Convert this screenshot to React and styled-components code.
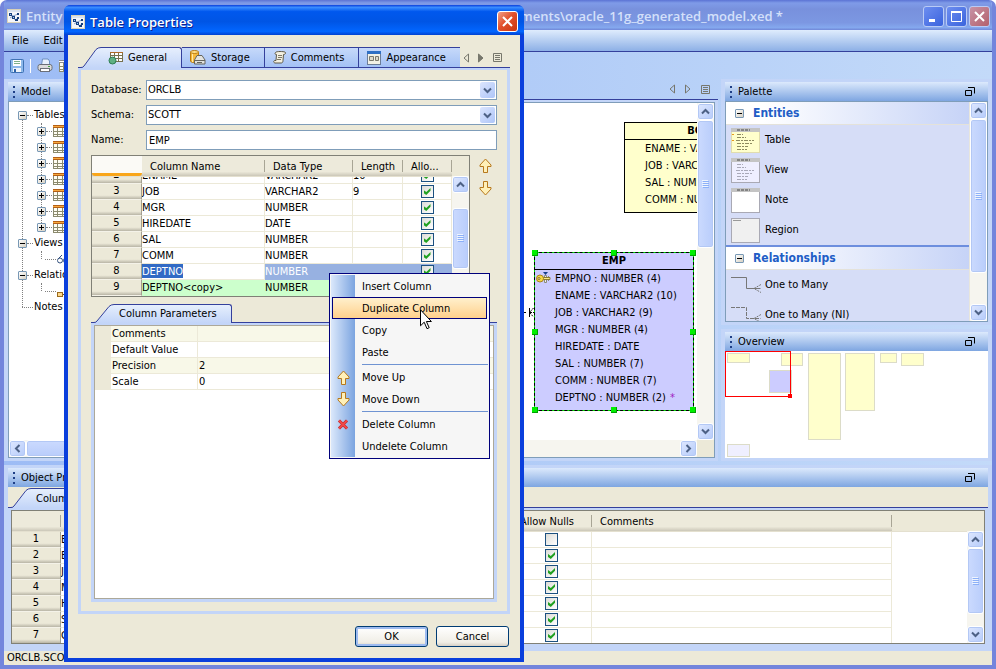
import React from 'react';
import styled, { createGlobalStyle, css } from 'styled-components';

const colors = {
  face: '#ece9d8',
  panel: '#c3d5f8',
  navy: '#34409c',
  input: '#7f9db9',
  line: '#ece9d8',
  green: '#ccffcc',
};

const GlobalStyle = createGlobalStyle`
  *, *::before, *::after {
    box-sizing: border-box;
  }

  body {
    margin: 0;
    overflow: hidden;
    color: #000;
    font: 11px/16px "DejaVu Sans Condensed", Tahoma, Verdana, sans-serif;
  }

  button, input, select {
    font: inherit;
    color: inherit;
    margin: 0;
    padding: 0;
    border: 0;
    background: none;
  }

  h1, h2, h3, p, ul {
    margin: 0;
    padding: 0;
    font: inherit;
    list-style: none;
  }

  svg {
    display: block;
    flex: none;
  }
`;

/* ---------- icons ---------- */

const AppIcon = () => (
  <svg width="14" height="14" viewBox="0 0 14 14">
    <rect width="14" height="14" rx="1" fill="#f4f6fa" />
    <rect width="14" height="3" fill="#d8e2f0" />
    <rect x="0.5" y="0.5" width="13" height="13" fill="none" stroke="#d9d2b8" />
    <path d="M3 5 L6 7 L11 5 M3 9 L6 7 L8 11 L11 9" fill="none" stroke="#8aa5cc" />
    <path d="M2 4h3v3h-3z M5 7h3v3h-3z M10 4h2v2h-2z M8 10h3v2h-3z M10 8h2v2h-2z" fill="#173f7d" />
    <path d="M3 5h1v1h-1z M6 8h1v1h-1z" fill="#9fd0f5" />
  </svg>
);

const SaveIcon = () => (
  <svg width="14" height="14" viewBox="0 0 14 14">
    <rect x="0.5" y="0.5" width="13" height="13" rx="1" fill="#8db8ea" stroke="#3f72b4" />
    <rect x="3" y="1" width="8" height="6" fill="#fff" />
    <path d="M4 2.500h6 M4 4.500h6" stroke="#7fb08a" />
    <rect x="3" y="9" width="8" height="4" fill="#eef3fa" />
    <rect x="4" y="10" width="2" height="3" fill="#2f62a8" />
  </svg>
);

const PrintIcon = () => (
  <svg width="16" height="15" viewBox="0 0 16 15">
    <path d="M4.500 7 L5.500 1 L11 1 L12.500 3 L12.500 7" fill="#e8f1fd" stroke="#6c8fc0" />
    <rect x="1" y="6.500" width="14" height="6" rx="2" fill="#dcdcdc" stroke="#6b6f78" />
    <rect x="3.500" y="10.500" width="9" height="3" fill="#fff" stroke="#6b6f78" />
    <rect x="11" y="8" width="2" height="1" fill="#3fa43f" />
  </svg>
);

const TableIcon = ({ head = '#b45f16', accent = '#f7a83c' }) => (
  <svg width="14" height="12" viewBox="0 0 14 12">
    <rect x="0.5" y="0.5" width="13" height="11" fill="#fffdf2" stroke="#8b8a6e" />
    <path d="M0 6.500h14 M0 9.500h14 M4.500 3v9 M9.500 3v9" stroke="#8b8a6e" />
    <rect width="14" height="3" fill={head} />
    <rect y="1" width="14" height="1" fill={accent} />
  </svg>
);

const GlassesIcon = () => (
  <svg width="14" height="10" viewBox="0 0 14 10" fill="none" stroke="#33507d">
    <circle cx="3" cy="6.500" r="2.500" />
    <circle cx="9" cy="6.500" r="2.500" />
    <path d="M1 5 L5 1 M7 5 L11 1" />
  </svg>
);

const RelationIcon = () => (
  <svg width="14" height="12" viewBox="0 0 14 12">
    <path d="M5 9.500h6 M11 4v5" stroke="#5b4a2c" fill="none" />
    <rect x="0.5" y="7.500" width="5" height="4" fill="#ffd98c" stroke="#9b6b1d" />
    <rect x="8.500" y="0.500" width="5" height="4" fill="#ffd98c" stroke="#9b6b1d" />
  </svg>
);

const GeneralIcon = () => (
  <svg width="15" height="13" viewBox="0 0 15 13">
    <rect x="2.500" y="0.500" width="12" height="9" fill="#fff" stroke="#77714f" />
    <path d="M2 3.500h13 M2 6.500h13 M6.500 0v10 M10.500 0v10" stroke="#77714f" />
    <rect x="2" y="0" width="13" height="1" fill="#b06a28" />
    <circle cx="4.500" cy="8.500" r="3.500" fill="#5fb083" stroke="#2d7d52" />
  </svg>
);

const StorageIcon = () => (
  <svg width="16" height="15" viewBox="0 0 16 15">
    <path d="M0.500 2v9c0 2 8 2 8 0V2z" fill="#f6b93a" stroke="#b97b12" />
    <path d="M2.500 3v9" stroke="#ffe9a8" />
    <ellipse cx="4.500" cy="2" rx="4" ry="1.500" fill="#ffe08a" stroke="#b97b12" />
    <path d="M4.500 10l2.500-4.500h5l3 4.500v4h-10.500z" fill="#e2e2de" stroke="#66665f" />
    <path d="M4.500 10.500h10.500 M7 12.500h5" stroke="#66665f" />
  </svg>
);

const CommentsIcon = () => (
  <svg width="13" height="13" viewBox="0 0 13 13">
    <path d="M2.500 1.500c1-1.500 8-1 9.500-.5c1 1 .5 2.500-1.500 2.500l-.5 6c0 2-1 2.500-2 2.500h-6c-2-.5-1.500-2.500 0-2.500h1l.500-6c-1.500 0-2-1-1-2z" fill="#f3efdf" stroke="#5d5948" />
    <path d="M5 4.500h4 M5 6.500h4 M4 8.500h4" stroke="#7d7967" />
  </svg>
);

const AppearanceIcon = () => (
  <svg width="14" height="14" viewBox="0 0 14 14">
    <rect x="0.500" y="0.500" width="13" height="13" fill="#f3f1e6" stroke="#6c7d97" />
    <rect x="0" y="0" width="14" height="3" fill="#2f6fc4" />
    <path d="M2.500 5.500h4v4h-4z M8.500 5.500h3v4h-3z" fill="#dcd9cb" stroke="#7c7a6e" />
  </svg>
);

const GoldArrow = ({ down }) => (
  <svg width="13" height="15" viewBox="0 0 13 15">
    <path
      d={down
        ? 'M4.500 .5h4v6h3.500v1.500l-5.500 6l-5.500-6v-1.500h3.500z'
        : 'M4.500 14.500h4v-6h3.500v-1.500l-5.500-6l-5.500 6v1.500h3.500z'}
      fill="#fff0b8"
      stroke="#b7791c"
    />
  </svg>
);

const DeleteIcon = () => (
  <svg width="12" height="11" viewBox="0 0 12 11">
    <path d="M2 1.500 L10 9.500 M10 1.500 L2 9.500" stroke="#b82020" strokeWidth="3" />
    <path d="M2 1.500 L10 9.500 M10 1.500 L2 9.500" stroke="#f04848" strokeWidth="2" />
  </svg>
);

const Chevron = ({ dir }) => {
  const turn = { up: 0, right: 90, down: 180, left: 270 }[dir];
  return (
    <svg width="9" height="9" viewBox="0 0 9 9">
      <path
        d="M1 6.500 L4.500 3 L8 6.500"
        transform={`rotate(${turn} 4.5 4.5)`}
        fill="none"
        stroke="#4d6185"
        strokeWidth="2"
      />
    </svg>
  );
};

const NavIcons = ({ solid }) => (
  <>
    <svg width="6" height="10" viewBox="0 0 6 10">
      <path d="M5.500 1v8l-4.500-4z" fill="none" stroke="#77776c" />
    </svg>
    <svg width="6" height="10" viewBox="0 0 6 10">
      <path d="M.5 1v8l4.500-4z" fill={solid ? '#77776c' : 'none'} stroke="#77776c" />
    </svg>
    <svg width="9" height="9" viewBox="0 0 9 9">
      <path d="M.5 .5h8v8h-8z M2 2.500h5 M2 4.500h5 M2 6.500h5" fill="none" stroke="#77776c" />
    </svg>
  </>
);

const FloatIcon = () => (
  <svg width="10" height="9" viewBox="0 0 10 9" fill="none" stroke="#000">
    <path d="M.5 3.500h6v5h-6z M3 .5h6.500v6" />
  </svg>
);

const PointerIcon = () => (
  <svg width="12" height="21" viewBox="0 0 12 21">
    <path d="M.5 .8v16l3.700-3.600l2.800 6.500l2.200-1l-2.800-6.200h5z" fill="#fff" stroke="#000" />
  </svg>
);

const KeyIcon = () => (
  <svg width="15" height="12" viewBox="0 0 15 12">
    <path d="M7 0h5l-2.500 3z" fill="#173f8a" />
    <path d="M8.500 3.500h2v7h-2z M12.500 4v5" fill="#eee" stroke="#8a8a7a" />
    <path d="M7 5.500h7v2h-7z" fill="#fbe98a" stroke="#8a7a30" />
    <circle cx="4" cy="6.500" r="3.500" fill="#f6d743" stroke="#a8841c" />
    <circle cx="3" cy="6.500" r="1" fill="#fff" stroke="#8a6a10" />
  </svg>
);

const EntityThumb = ({ kind }) => {
  const fill = { table: '#ffffcc', view: '#efefff', note: '#fff', region: '#f0f0f0' }[kind];
  return (
    <svg width="29" height="25" viewBox="0 0 29 25">
      <rect x="0.500" y="0.500" width="28" height="24" fill={fill} stroke={kind === 'table' ? '#e0dcae' : '#a9a9b4'} />
      {kind !== 'region' && <rect x="0" y="0" width="29" height="4" fill="#c4c4c4" />}
      {kind !== 'region' && <path d="M6 2h13" stroke="#444" strokeDasharray="3 1" />}
      {kind === 'region' && <path d="M2 2.500h8" stroke="#999" />}
      {(kind === 'table' || kind === 'view') && (
        <path
          d="M6 6.500h6 M6 9.500h9 M5 12.500h18 M6 15.500h16 M6 18.500h11 M6 21.500h10"
          stroke={kind === 'table' ? '#8d8b60' : '#a9a9b8'}
          strokeDasharray="4 1 2 1"
        />
      )}
      {kind === 'table' && <path d="M1 6h2v1h-2z M1 12h2v1h-2z" fill="#e89a1c" />}
    </svg>
  );
};

const RelationThumb = ({ dashed }) => (
  <svg width="31" height="16" viewBox="0 0 31 16" fill="none" stroke="#777">
    <path d="M0 .5h15.500v11h14" strokeDasharray={dashed ? '4 1' : undefined} />
    <path d="M30 7.500l-7 4l7 4" strokeDasharray="2 1" />
  </svg>
);

/* ---------- window chrome ---------- */

const Window = styled.div`
  position: relative;
  display: flex;
  flex-direction: column;
  height: 100vh;
  border: solid #7385dc;
  border-width: 0 4px 4px;
  border-radius: 7px 7px 0 0;
  overflow: hidden;
  background: linear-gradient(90deg, #9dbcf5, #c3daf9);
`;

const titleFont = css`
  font: 600 13px/18px "Open Sans", "Noto Sans", sans-serif;
`;

const WindowTitle = styled.header`
  display: flex;
  flex: none;
  align-items: center;
  height: 30px;
  margin: 0 -4px;
  padding: 2px 6px 0 7px;
  color: #d4e0fa;
  ${titleFont}
  background: linear-gradient(#5b73d4, #7f9be8 10%, #7891dd 30%, #7c97e2 75%, #84a8ee 92%, #7087d8);

  h1 {
    flex: 1;
    margin-left: 5px;
  }

  p {
    margin-right: 138px;
  }
`;

const CaptionButton = styled.button`
  display: grid;
  place-items: center;
  width: 21px;
  height: 21px;
  margin-left: 2px;
  border: 1px solid ${({ $active }) => ($active ? '#fff' : '#b9cbf6')};
  border-radius: 3px;
  background: ${({ $close, $active }) => {
    if ($active) return 'linear-gradient(135deg, #f0a088, #e2512c 45%, #c8350f)';
    return $close
      ? 'linear-gradient(135deg, #c893a6, #b3606c)'
      : 'linear-gradient(135deg, #6d8ef0, #3a63dd)';
  }};
`;

const CaptionIcon = ({ d, width = 2 }) => (
  <svg width="13" height="13" viewBox="0 0 13 13">
    <path d={d} fill="none" stroke="#fff" strokeWidth={width} />
  </svg>
);

const crossPath = 'M2 2L11 11M11 2L2 11';

const MenuBar = styled.nav`
  display: flex;
  flex: none;
  align-items: center;
  gap: 15px;
  height: 22px;
  padding: 0 8px;
  border-bottom: 1px solid ${colors.navy};
  background: linear-gradient(#dfecfd, #8db0e6);
`;

const ToolBar = styled.div`
  display: flex;
  flex: none;
  align-items: center;
  gap: 6px;
  height: 27px;
  padding: 0 6px;
`;

const ToolDivider = styled.span`
  width: 1px;
  height: 14px;
  background: #fff;
`;

const Workspace = styled.main`
  display: grid;
  flex: 1;
  min-height: 0;
  grid-template-columns: 180px 1fr 271px;
  gap: 3px;
  margin-bottom: 4px;
`;

const SideColumn = styled.div`
  display: flex;
  flex-direction: column;
  gap: 4px;
  min-height: 0;
`;

const Panel = styled.section`
  display: flex;
  flex-direction: column;
  flex: ${({ $grow }) => ($grow ? '1 1 0' : 'none')};
  min-width: 0;
  min-height: 0;
  padding: 3px 4px;
  background: ${colors.panel};
`;

const PanelHeader = styled.h2`
  display: flex;
  flex: none;
  align-items: center;
  height: 19px;
  padding: 0 13px 0 5px;
  background: linear-gradient(#dce9fc, #7ea6e1);

  span {
    flex: 1;
    margin-left: 5px;
  }
`;

const PanelTitle = ({ title, floating }) => (
  <PanelHeader>
    <svg width="3" height="12" viewBox="0 0 3 12">
      <path d="M0 0h2v2h-2z M0 5h2v2h-2z M0 10h2v2h-2z" fill="#1e3f87" />
    </svg>
    <span>{title}</span>
    {floating && <FloatIcon />}
  </PanelHeader>
);

/* ---------- scroll bars ---------- */

const Track = styled.div`
  display: flex;
  flex: none;
  flex-direction: ${({ $row }) => ($row ? 'row' : 'column')};
  ${({ $row }) => ($row ? 'height: 17px' : 'width: 17px')};
  background: #f6f5ef;
`;

const luna = css`
  border: 1px solid #fff;
  border-radius: 3px;
  box-shadow: inset 0 0 0 1px #b3c8f5;
`;

const ScrollButton = styled.button`
  ${luna}
  display: grid;
  flex: none;
  place-items: center;
  width: 17px;
  height: 17px;
  background: linear-gradient(135deg, #dfe8ff, #b5cbfa);
`;

const Thumb = styled.div`
  ${luna}
  display: grid;
  place-items: center;
  flex: ${({ $share }) => $share} 1 0;
  background: linear-gradient(${({ $row }) => ($row ? 180 : 90)}deg, #cbdafe, #b9cdfb);
`;

const Rest = styled.div`
  flex: ${({ $share }) => $share} 1 0;
`;

const ScrollBar = ({ row, before = 0, thumb, rest }) => (
  <Track $row={row}>
    <ScrollButton type="button" aria-label={row ? 'Scroll left' : 'Scroll up'}>
      <Chevron dir={row ? 'left' : 'up'} />
    </ScrollButton>
    <Rest $share={before} />
    <Thumb $row={row} $share={thumb}>
      {!row && (
        <svg width="7" height="8" viewBox="0 0 7 8">
          <path d="M0 .5h6 M0 2.500h6 M0 4.500h6 M0 6.500h6" stroke="#eef4fe" />
          <path d="M1 1.500h6 M1 3.500h6 M1 5.500h6 M1 7.500h6" stroke="#8cb0f8" />
        </svg>
      )}
    </Thumb>
    <Rest $share={rest} />
    <ScrollButton type="button" aria-label={row ? 'Scroll right' : 'Scroll down'}>
      <Chevron dir={row ? 'right' : 'down'} />
    </ScrollButton>
  </Track>
);

/* ---------- model tree ---------- */

const SunkenBox = styled.div`
  display: flex;
  flex: 1 1 0;
  flex-direction: column;
  min-height: 0;
  overflow: hidden;
  border: 1px solid ${colors.input};
  background: #fff;
`;

const Tree = styled.ul`
  position: relative;
  flex: 1;
  padding: 5px 0 0 9px;

  &::before {
    content: '';
    position: absolute;
    top: 13px;
    left: 13px;
    height: 192px;
    border-left: 1px dotted #808080;
  }
`;

const Branch = styled.ul`
  position: relative;
  padding-left: ${({ $leaf }) => ($leaf ? 23 : 19)}px;

  &::before {
    content: '';
    position: absolute;
    top: 0;
    bottom: 8px;
    left: 23px;
    border-left: 1px dotted #808080;
  }
`;

const TreeRow = styled.div`
  display: flex;
  align-items: center;
  height: 16px;

  &::before {
    content: '';
    order: 1;
    width: ${({ $leaf }) => ($leaf ? 11 : 6)}px;
    margin: 0 1px 0 ${({ $leaf }) => ($leaf ? 4 : 0)}px;
    border-top: 1px dotted #808080;
  }

  > span,
  > svg {
    order: 2;
  }
`;

const Expander = styled.button`
  position: relative;
  display: grid;
  flex: none;
  place-items: center;
  width: 9px;
  height: 9px;
  border: 1px solid #7898b5;
  border-radius: 1px;
  background: linear-gradient(135deg, #fff, #d6d0c2);
`;

const ExpandButton = ({ open }) => (
  <Expander type="button" aria-label={open ? 'Collapse' : 'Expand'}>
    <svg width="5" height="5" viewBox="0 0 5 5">
      <path d={open ? 'M0 2.500h5' : 'M0 2.500h5 M2.500 0v5'} stroke="#000" />
    </svg>
  </Expander>
);

const ModelTree = () => (
  <Tree>
    <li>
      <TreeRow><ExpandButton open /><span>Tables</span></TreeRow>
      <Branch>
        {Array.from({ length: 7 }, (_, i) => (
          <TreeRow as="li" key={i}><ExpandButton /><TableIcon /></TreeRow>
        ))}
      </Branch>
    </li>
    <li>
      <TreeRow><ExpandButton open /><span>Views</span></TreeRow>
      <Branch $leaf><TreeRow as="li" $leaf><GlassesIcon /></TreeRow></Branch>
    </li>
    <li>
      <TreeRow><ExpandButton open /><span>Relationships</span></TreeRow>
      <Branch $leaf><TreeRow as="li" $leaf><RelationIcon /></TreeRow></Branch>
    </li>
    <TreeRow as="li" $leaf><span>Notes</span></TreeRow>
  </Tree>
);

/* ---------- diagram ---------- */

const Editor = styled.section`
  display: flex;
  flex-direction: column;
  min-width: 0;
  min-height: 0;
`;

const EditorTabs = styled.div`
  display: flex;
  flex: none;
  align-items: center;
  justify-content: flex-end;
  gap: 10px;
  height: 21px;
  padding-right: 8px;
  border-bottom: 1px solid ${colors.navy};
`;

const EditorBody = styled.div`
  display: flex;
  flex: 1;
  min-height: 0;
  padding: 2px 3px 3px;
  background: ${colors.panel};
`;

const CanvasRow = styled.div`
  display: flex;
  flex: 1;
  min-height: 0;
`;

const ScrollCorner = styled.div`
  display: grid;
  grid-template-columns: 1fr 17px;
  background: ${colors.face};
`;

const Canvas = styled.div`
  position: relative;
  flex: 1;
  overflow: hidden;
`;

const Entity = styled.div`
  position: absolute;
  left: ${({ $x }) => $x}px;
  top: ${({ $y }) => $y}px;
  width: ${({ $width }) => $width}px;
  padding-bottom: 4px;
  border: 1px ${({ $selected }) => ($selected ? 'dashed' : 'solid')} #000;
  background: ${({ $selected }) => ($selected
    ? 'linear-gradient(#ccccff, #ccccff) padding-box, #00e000'
    : '#ffffcc')};

  h3 {
    border-bottom: 1px solid #000;
    font-weight: bold;
    line-height: 16px;
    text-align: center;
  }

  li {
    padding-left: 20px;
    line-height: 17px;
    white-space: nowrap;
  }

  em {
    margin-left: 4px;
    color: #a020c0;
    font-style: normal;
  }
`;

const KeyMark = styled.span`
  position: absolute;
  top: 19px;
  left: 1px;
`;

const Handle = styled.i`
  position: absolute;
  left: ${({ $left }) => $left};
  top: ${({ $top }) => $top};
  width: 6px;
  height: 6px;
  margin: -3px;
  background: #00f000;
  border: solid #00a000;
  border-width: 0 1px 1px 0;
`;

const Connector = styled.svg`
  position: absolute;
  left: 323px;
  top: 203px;
`;

const stops = ['0%', '50%', '100%'];
const handles = stops
  .flatMap(left => stops.map(top => ({ left, top })))
  .filter(({ left, top }) => left !== '50%' || top !== '50%');

const bonusFields = ['ENAME : VARCHAR2 (10)', 'JOB : VARCHAR2 (9)', 'SAL : NUMBER', 'COMM : NUMBER'];
const empFields = [
  'EMPNO : NUMBER (4)',
  'ENAME : VARCHAR2 (10)',
  'JOB : VARCHAR2 (9)',
  'MGR : NUMBER (4)',
  'HIREDATE : DATE',
  'SAL : NUMBER (7)',
  'COMM : NUMBER (7)',
  'DEPTNO : NUMBER (2)',
];

const Diagram = () => (
  <Canvas>
    <Connector width="20" height="14" viewBox="0 0 20 14" fill="none" stroke="#000">
      <path d="M0 6.500h12 M15.500 2v9" />
      <path d="M19.500 2l-4 4.500l4 4.500 M16 6.500h4" strokeDasharray="2 1" />
    </Connector>
    <Entity $x={433} $y={19} $width={166}>
      <h3>BONUS</h3>
      <ul>{bonusFields.map(field => <li key={field}>{field}</li>)}</ul>
    </Entity>
    <Entity $x={343} $y={149} $width={160} $selected>
      <h3>EMP</h3>
      <ul>
        {empFields.map(field => (
          <li key={field}>{field}{field.startsWith('DEPTNO') && <em>*</em>}</li>
        ))}
      </ul>
      <KeyMark><KeyIcon /></KeyMark>
      {handles.map(({ left, top }) => <Handle key={left + top} $left={left} $top={top} />)}
    </Entity>
  </Canvas>
);

/* ---------- palette ---------- */

const PaletteBox = styled(SunkenBox)`
  flex-direction: row;
`;

const PaletteList = styled.div`
  flex: 1;
  overflow: hidden;
  background: #d6ddf7;
  border-right: 1px solid #e8e6dc;
`;

const PaletteHead = styled.h3`
  display: flex;
  align-items: center;
  gap: 9px;
  height: ${({ $ruled }) => ($ruled ? 25 : 23)}px;
  padding-left: 9px;
  border-top: ${({ $ruled }) => ($ruled ? '2px solid #6d8ede' : 'none')};
  border-bottom: 1px solid #e4e2da;
  color: #215dc6;
  font-size: 12px;
  font-weight: bold;
  background: linear-gradient(90deg, #fff 15%, #c6d3f7);
`;

const PaletteItem = styled.li`
  display: flex;
  align-items: center;
  gap: ${({ $relation }) => ($relation ? 3 : 5)}px;
  height: 30px;
  padding-left: 5px;
`;

/* ---------- grids ---------- */

const Grid = styled.table`
  display: flex;
  flex: 1;
  flex-direction: column;
  min-width: 0;
  min-height: 0;

  tr {
    display: grid;
    grid-template-columns: ${({ $columns }) => $columns};
  }

  thead {
    flex: none;
    background: linear-gradient(#edeadb 78%, #cbc7b8);
    border-bottom: 1px solid #e4e0cf;
  }

  tbody {
    display: flex;
    flex: 1;
    flex-direction: column;
    justify-content: ${({ $scrolled }) => ($scrolled ? 'flex-end' : 'flex-start')};
    min-height: 0;
    overflow: hidden;
    background: #fff;
  }

  th,
  td {
    padding: 0;
    overflow: hidden;
    font-weight: normal;
    text-align: left;
    white-space: nowrap;
  }

  thead th {
    height: 20px;
    padding-left: 8px;
    line-height: 21px;
    background: linear-gradient(#a8a595, #a8a595) right 4px / 1px 12px no-repeat;
  }

  tbody th {
    height: 16px;
    text-align: center;
    line-height: 14px;
    border-right: 1px solid #a39f90;
    background: linear-gradient(#ece9d8 75%, #b9b5a6);
    border-bottom: 1px solid #f4f2e8;
  }

  td {
    height: 16px;
    line-height: 16px;
    border-right: 1px solid ${colors.line};
    border-bottom: 1px solid ${colors.line};
  }
`;

const HotCorner = styled.th`
  && {
    background: #fbfaf6;
    border-bottom: 3px solid #f9a61a;
    border-radius: 0 0 3px 3px;
  }
`;

const Cell = styled.td`
  ${({ $tone }) => $tone === 'selected' && css`
    color: #fff;
    background: #97b1e1;
    && { border-color: #97b1e1; }
  `}
  ${({ $tone }) => $tone === 'added' && css`
    background: ${colors.green};
    && { border-color: ${colors.green}; }
  `}
`;

const EditingText = styled.mark`
  display: inline-block;
  height: 14px;
  line-height: 15px;
  color: #fff;
  background: #316ac5;
`;

const CheckCell = styled(Cell)`
  && {
    text-align: center;
    line-height: 0;
    padding-top: 1px;
  }
`;

const CheckBox = styled.input.attrs({ type: 'checkbox' })`
  appearance: none;
  width: 13px;
  height: 13px;
  border: 1px solid #1c5180;
  background: linear-gradient(135deg, #dcdcd7, #fff);

  &:checked::before {
    content: '';
    display: block;
    width: 7px;
    height: 7px;
    margin: 2px;
    background: #21a121;
    clip-path: polygon(0 28%, 40% 58%, 100% 0, 100% 40%, 40% 100%, 0 70%);
  }
`;

const GridFrame = styled.div`
  display: flex;
  flex: 1;
  min-width: 0;
  height: ${({ $height }) => $height};
  border: 1px solid #808076;
  background: ${colors.face};
`;

const GridScroll = styled.div`
  display: flex;
  padding-top: 20px;
  background: ${colors.face};
`;

/* ---------- tabs ---------- */

const TabStrip = styled.div`
  display: flex;
  flex: none;
  height: ${({ $height }) => $height}px;
  margin-bottom: -1px;
`;

const TabFace = styled.button`
  display: flex;
  align-items: center;
  gap: 5px;
  padding: 0 14px 0 ${({ $active, $plain }) => {
    if ($plain) return 3;
    return $active ? 5 : 8;
  }}px;
  border-top: 1px solid ${colors.navy};
  border-right: ${({ $cut }) => ($cut ? 'none' : `1px solid ${colors.navy}`)};
  border-bottom: ${({ $active }) => ($active ? 'none' : `1px solid ${colors.navy}`)};
  border-radius: 0 ${({ $active }) => ($active ? 3 : 0)}px 0 0;
  background: ${({ $active }) => ($active
    ? `linear-gradient(#e6effd, ${colors.panel})`
    : 'linear-gradient(#c6d9fa, #a3c1f5)')};
`;

const TabSlope = ({ height }) => (
  <svg width="25" height={height} viewBox={`0 0 25 ${height}`}>
    <defs>
      <linearGradient id="tabFill" x1="0" y1="0" x2="0" y2="1">
        <stop offset="0" stopColor="#e6effd" />
        <stop offset="1" stopColor={colors.panel} />
      </linearGradient>
    </defs>
    <path
      d={`M0 ${height - 0.5}h3q2 0 3-1.500L18 2.500q2-2 5-2h2V${height}H0z`}
      fill="url(#tabFill)"
    />
    <path
      d={`M0 ${height - 0.5}h3q2 0 3-1.500L18 2.500q2-2 5-2h2`}
      fill="none"
      stroke={colors.navy}
    />
  </svg>
);

const TabArrows = styled.div`
  display: flex;
  flex: 1;
  align-items: center;
  justify-content: flex-end;
  gap: 9px;
  padding-right: 8px;
`;

const TabBody = styled.div`
  padding: ${({ $pad }) => $pad};
  border: 3px solid ${colors.panel};
  border-top-width: 2px;
  background: ${colors.face};
`;

const TabFrame = styled.div`
  border-top: 1px solid ${colors.navy};
`;

/* ---------- dialog ---------- */

const Dialog = styled.section`
  position: absolute;
  top: 5px;
  left: 60px;
  width: 460px;
  border: 4px solid #0a3fdc;
  border-top: 0;
  border-radius: 7px 7px 0 0;
  background: ${colors.face};
`;

const DialogTitle = styled.header`
  display: flex;
  align-items: center;
  height: 30px;
  margin: 0 -4px;
  padding: 3px 6px 0 7px;
  border-radius: 6px 6px 0 0;
  color: #fff;
  ${titleFont}
  text-shadow: 1px 1px #0f1f8c;
  background: linear-gradient(#0a3fdc, #3a8cff 8%, #0058ee 22%, #0055e5 55%, #0266ff 88%, #0141d0);

  h2 {
    flex: 1;
    margin-left: 5px;
  }
`;

const DialogContent = styled.div`
  padding: 12px 10px 11px;
`;

const Field = styled.div`
  display: grid;
  grid-template-columns: 55px 1fr;
  align-items: center;
  margin-bottom: 5px;
`;

const control = css`
  width: 100%;
  height: 20px;
  padding: 0 2px;
  border: 1px solid ${colors.input};
  background: #fff;
`;

const TextInput = styled.input`
  ${control}
`;

const Select = styled.select`
  ${control}
  padding-left: 1px;
  appearance: none;
`;

const SelectWrap = styled.div`
  position: relative;
`;

const SelectArrow = styled.span`
  position: absolute;
  top: 2px;
  right: 2px;
  display: grid;
  place-items: center;
  width: 15px;
  height: 16px;
  border-radius: 2px;
  background: linear-gradient(135deg, #dbe5fe, #aec5f8);
  pointer-events: none;
`;

const GridRow = styled.div`
  display: flex;
  gap: 9px;
  margin-bottom: 7px;
  padding-right: 5px;
`;

const MoveButtons = styled.div`
  display: flex;
  flex-direction: column;
  gap: 8px;
  padding-top: 3px;
`;

const ParamBox = styled.div`
  height: 274px;
  border: 1px solid #aca899;
  background: #fff;
`;

const ParamTable = styled.table`
  width: 100%;
  border-spacing: 0;

  tr:nth-child(odd) {
    background: #f8f8e8;
  }

  th,
  td {
    height: 16px;
    padding: 0 1px;
    border: solid ${colors.line};
    border-width: 0 0 1px 16px;
    font-weight: normal;
    line-height: 15px;
    text-align: left;
  }

  th {
    width: 102px;
  }

  td {
    border-left-width: 1px;
  }
`;

const DialogActions = styled.footer`
  display: flex;
  justify-content: flex-end;
  gap: 8px;
  padding: 12px 1px 0 0;
`;

const PushButton = styled.button`
  width: 73px;
  height: 21px;
  border: 1px solid #003c74;
  border-radius: 3px;
  background: linear-gradient(#fff, #f0eee6 80%, #d6d0c5);
  box-shadow: ${({ $default }) => ($default ? 'inset 0 0 0 2px #9ebbf0' : 'none')};
`;

/* ---------- context menu ---------- */

const Menu = styled.ul`
  position: absolute;
  top: 273px;
  left: 325px;
  width: 161px;
  padding: 1px;
  border: 1px solid #00007b;
  background: linear-gradient(90deg, #dbe8fb, #7ba4e0) 1px 1px / 24px calc(100% - 2px) no-repeat #f6f6f6;
`;

const MenuItem = styled.button`
  display: flex;
  align-items: center;
  width: calc(100% - 2px);
  height: 22px;
  margin: 0 1px;
  padding: 1px 0 0 1px;
  text-align: left;
  border: 1px solid transparent;
  ${({ $hot }) => $hot && css`
    border-color: #00007b;
    background: linear-gradient(#fff0cc, #ffd08c);
  `}
`;

const MenuIcon = styled.span`
  display: grid;
  flex: none;
  place-items: center;
  width: 18px;
  margin-right: 10px;
`;

const MenuRule = styled.li`
  height: 1px;
  margin: 1px 0 1px 31px;
  background: #6f93d2;
`;

const Pointer = styled.span`
  position: absolute;
  top: 309px;
  left: 416px;
  pointer-events: none;
`;

const menuGroups = [
  [['Insert Column'], ['Duplicate Column'], ['Copy'], ['Paste']],
  [['Move Up', <GoldArrow />], ['Move Down', <GoldArrow down />]],
  [['Delete Column', <DeleteIcon />], ['Undelete Column']],
];

const ContextMenu = () => (
  <Menu>
    {menuGroups.map((group, i) => (
      <React.Fragment key={group[0][0]}>
        {i > 0 && <MenuRule />}
        {group.map(([label, icon]) => (
          <li key={label}>
            <MenuItem type="button" $hot={label === 'Duplicate Column'}>
              <MenuIcon>{icon}</MenuIcon>
              {label}
            </MenuItem>
          </li>
        ))}
      </React.Fragment>
    ))}
  </Menu>
);

const columnRows = [
  { id: 2, name: 'ENAME', type: 'VARCHAR2', length: '10' },
  { id: 3, name: 'JOB', type: 'VARCHAR2', length: '9' },
  { id: 4, name: 'MGR', type: 'NUMBER' },
  { id: 5, name: 'HIREDATE', type: 'DATE' },
  { id: 6, name: 'SAL', type: 'NUMBER' },
  { id: 7, name: 'COMM', type: 'NUMBER' },
  { id: 8, name: 'DEPTNO', type: 'NUMBER', tone: 'selected' },
  { id: 9, name: 'DEPTNO<copy>', type: 'NUMBER', tone: 'added' },
];

const params = [['Comments', ''], ['Default Value', ''], ['Precision', '2'], ['Scale', '0']];

const SelectField = ({ id, label, value }) => (
  <Field>
    <label htmlFor={id}>{label}</label>
    <SelectWrap>
      <Select id={id} defaultValue={value}><option>{value}</option></Select>
      <SelectArrow><Chevron dir="down" /></SelectArrow>
    </SelectWrap>
  </Field>
);

const TableDialog = () => (
  <Dialog>
    <DialogTitle>
      <AppIcon />
      <h2>Table Properties</h2>
      <CaptionButton type="button" aria-label="Close" $active>
        <CaptionIcon d={crossPath} />
      </CaptionButton>
    </DialogTitle>
    <DialogContent>
      <TabStrip $height={21}>
        <TabSlope height={21} />
        <TabFace type="button" $active><GeneralIcon />General</TabFace>
        <TabFace type="button"><StorageIcon />Storage</TabFace>
        <TabFace type="button"><CommentsIcon />Comments</TabFace>
        <TabFace type="button" $cut><AppearanceIcon />Appearance</TabFace>
        <TabArrows><NavIcons solid /></TabArrows>
      </TabStrip>
      <TabFrame>
        <TabBody $pad="10px 10px 9px">
          <SelectField id="database" label="Database:" value="ORCLB" />
          <SelectField id="schema" label="Schema:" value="SCOTT" />
          <Field>
            <label htmlFor="name">Name:</label>
            <TextInput id="name" defaultValue="EMP" />
          </Field>
          <GridRow>
            <GridFrame $height="142px">
              <Grid $columns="50px 123px 88px 50px 1fr" $scrolled>
                <thead>
                  <tr>
                    <HotCorner aria-label="Row" />
                    <th>Column Name</th>
                    <th>Data Type</th>
                    <th>Length</th>
                    <th>Allo...</th>
                  </tr>
                </thead>
                <tbody>
                  {columnRows.map(({ id, name, type, length, tone }) => (
                    <tr key={id}>
                      <th scope="row">{id}</th>
                      <Cell $tone={tone === 'added' ? tone : undefined}>
                        {tone === 'selected' ? <EditingText>{name}</EditingText> : name}
                      </Cell>
                      <Cell $tone={tone}>{type}</Cell>
                      <Cell $tone={tone}>{length}</Cell>
                      <CheckCell $tone={tone}>
                        <CheckBox aria-label={`${name} allows nulls`} defaultChecked />
                      </CheckCell>
                    </tr>
                  ))}
                </tbody>
              </Grid>
              <GridScroll><ScrollBar before={15} thumb={61} rest={10} /></GridScroll>
            </GridFrame>
            <MoveButtons>
              <button type="button" aria-label="Move column up"><GoldArrow /></button>
              <button type="button" aria-label="Move column down"><GoldArrow down /></button>
            </MoveButtons>
          </GridRow>
          <TabStrip $height={19}>
            <TabSlope height={19} />
            <TabFace type="button" $active $plain>Column Parameters</TabFace>
          </TabStrip>
          <TabFrame>
            <TabBody $pad="0">
              <ParamBox>
                <ParamTable>
                  <tbody>
                    {params.map(([label, value]) => (
                      <tr key={label}><th scope="row">{label}</th><td>{value}</td></tr>
                    ))}
                  </tbody>
                </ParamTable>
              </ParamBox>
            </TabBody>
          </TabFrame>
        </TabBody>
      </TabFrame>
      <DialogActions>
        <PushButton type="button" $default>OK</PushButton>
        <PushButton type="button">Cancel</PushButton>
      </DialogActions>
    </DialogContent>
  </Dialog>
);

/* ---------- bottom panel ---------- */

const PropertyTabs = styled.div`
  padding-top: 1px;
  background: ${colors.face};
  border-bottom: 1px solid ${colors.navy};
`;

const PropertyBody = styled.div`
  display: flex;
  padding: 2px 3px 4px;

  td:last-child {
    border: 0;
  }

  thead th:last-child {
    background: ${colors.face};
  }
`;

const StatusBar = styled.footer`
  flex: none;
  height: 14px;
  padding-left: 3px;
  line-height: 14px;
  background: ${colors.face};
`;

const propertyRows = ['EMPNO', 'ENAME', 'JOB', 'MGR', 'HIREDATE', 'SAL', 'COMM'];

const ObjectProperties = () => (
  <Panel>
    <PanelTitle title="Object Properties" floating />
    <PropertyTabs>
      <TabStrip $height={20}>
        <TabSlope height={20} />
        <TabFace type="button" $active $plain>Columns</TabFace>
      </TabStrip>
    </PropertyTabs>
    <PropertyBody>
      <GridFrame $height="134px">
        <Grid $columns="49px 1fr 80px 300px 75px">
          <thead>
            <tr>
              <th aria-label="Row" />
              <th>Column Name</th>
              <th>Allow Nulls</th>
              <th>Comments</th>
              <th aria-label="Filler" />
            </tr>
          </thead>
          <tbody>
            {propertyRows.map((name, i) => (
              <tr key={name}>
                <th scope="row">{i + 1}</th>
                <td>{name}</td>
                <CheckCell>
                  <CheckBox aria-label={`${name} allows nulls`} defaultChecked={i > 0} />
                </CheckCell>
                <td />
                <td />
              </tr>
            ))}
          </tbody>
        </Grid>
        <GridScroll><ScrollBar thumb={66} rest={12} /></GridScroll>
      </GridFrame>
    </PropertyBody>
  </Panel>
);

const overviewShapes = [
  [2, 2, 22, 9, '#ffffcc'],
  [56, 2, 21, 12, '#ffffcc'],
  [44, 19, 22, 22, '#ccccff'],
  [83, 2, 32, 86, '#ffffcc'],
  [120, 2, 29, 57, '#ffffcc'],
  [155, 2, 16, 9, '#ffffcc'],
  [176, 2, 22, 12, '#ffffcc'],
  [2, 93, 22, 12, '#efefff'],
];

const OverviewMap = styled.svg`
  width: 100%;
  height: 107px;
  background: #fff;
`;

export default function App() {
  return (
    <Window>
      <GlobalStyle />
      <WindowTitle>
        <AppIcon />
        <h1>Entity</h1>
        <p>Documents\oracle_11g_generated_model.xed *</p>
        <CaptionButton type="button" aria-label="Minimize"><CaptionIcon d="M2 10.500h6" width={3} /></CaptionButton>
        <CaptionButton type="button" aria-label="Maximize"><CaptionIcon d="M1 1.500h11M1 2.500h11M1.500 2v9.500h10v-9.500" width={1} /></CaptionButton>
        <CaptionButton type="button" aria-label="Close" $close><CaptionIcon d={crossPath} /></CaptionButton>
      </WindowTitle>
      <MenuBar>
        <button type="button">File</button>
        <button type="button">Edit</button>
      </MenuBar>
      <ToolBar>
        <button type="button" aria-label="Save"><SaveIcon /></button>
        <ToolDivider />
        <button type="button" aria-label="Print"><PrintIcon /></button>
        <button type="button" aria-label="Grid"><TableIcon head="#8b8a8e" accent="#fff" /></button>
      </ToolBar>
      <Workspace>
        <Panel>
          <PanelTitle title="Model" />
          <SunkenBox>
            <ModelTree />
            <ScrollBar row thumb={8} rest={2} />
          </SunkenBox>
        </Panel>
        <Editor>
          <EditorTabs><NavIcons /></EditorTabs>
          <EditorBody>
            <SunkenBox>
              <CanvasRow>
                <Diagram />
                <ScrollBar thumb={127} rest={176} />
              </CanvasRow>
              <ScrollCorner><ScrollBar row thumb={2} rest={6} /></ScrollCorner>
            </SunkenBox>
          </EditorBody>
        </Editor>
        <SideColumn>
          <Panel $grow>
            <PanelTitle title="Palette" floating />
            <PaletteBox>
              <PaletteList>
                <PaletteHead><ExpandButton open />Entities</PaletteHead>
                <ul>
                  {['Table', 'View', 'Note', 'Region'].map(label => (
                    <PaletteItem key={label}><EntityThumb kind={label.toLowerCase()} />{label}</PaletteItem>
                  ))}
                </ul>
                <PaletteHead $ruled><ExpandButton open />Relationships</PaletteHead>
                <ul>
                  <PaletteItem $relation><RelationThumb />One to Many</PaletteItem>
                  <PaletteItem $relation><RelationThumb dashed />One to Many (NI)</PaletteItem>
                </ul>
              </PaletteList>
              <ScrollBar thumb={154} rest={32} />
            </PaletteBox>
          </Panel>
          <Panel>
            <PanelTitle title="Overview" floating />
            <OverviewMap>
              {overviewShapes.map(([x, y, width, height, fill]) => (
                <rect key={`${x}-${y}`} x={x + 0.5} y={y + 0.5} width={width} height={height} fill={fill} stroke="#dcdcc8" />
              ))}
              <rect x="0.5" y="0.5" width="65" height="45" fill="none" stroke="#f00" />
              <rect x="63" y="43" width="4" height="4" fill="#f00" />
            </OverviewMap>
          </Panel>
        </SideColumn>
      </Workspace>
      <ObjectProperties />
      <StatusBar>ORCLB.SCOTT</StatusBar>
      <TableDialog />
      <ContextMenu />
      <Pointer><PointerIcon /></Pointer>
    </Window>
  );
}
